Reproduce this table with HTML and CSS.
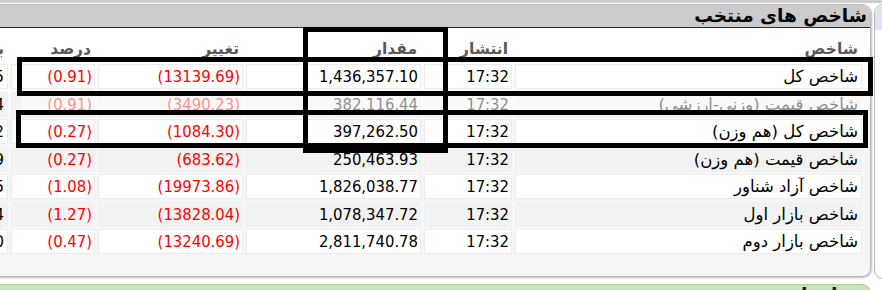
FILE: index.html
```html
<!DOCTYPE html>
<html lang="fa">
<head>
<meta charset="utf-8">
<title>شاخص های منتخب</title>
<link rel="stylesheet" href="styles.css">
</head>
<body>
<div class="page">
  <div class="above"></div>
  <div class="panels">
    <section class="panel main">
      <header class="main-head"><h2>شاخص های منتخب</h2></header>
      <div class="main-body">
        <div class="idx">
          <div class="row head">
            <div class="cell">شاخص</div>
            <div class="cell">انتشار</div>
            <div class="cell">مقدار</div>
            <div class="cell">تغییر</div>
            <div class="cell">درصد</div>
            <div class="cell">بیشترین</div>
          </div>
          <div class="row odd">
            <div class="cell name">شاخص کل</div>
            <div class="cell num">17:32</div>
            <div class="cell num">1,436,357.10</div>
            <div class="cell num neg">(13139.69)</div>
            <div class="cell num neg">(0.91)</div>
            <div class="cell num far">1,449,496.85</div>
          </div>
          <div class="row even">
            <div class="cell name">شاخص قیمت (وزنی-ارزشی)</div>
            <div class="cell num">17:32</div>
            <div class="cell num">382,116.44</div>
            <div class="cell num neg">(3490.23)</div>
            <div class="cell num neg">(0.91)</div>
            <div class="cell num far">385,606.14</div>
          </div>
          <div class="row odd">
            <div class="cell name">شاخص کل (هم وزن)</div>
            <div class="cell num">17:32</div>
            <div class="cell num">397,262.50</div>
            <div class="cell num neg">(1084.30)</div>
            <div class="cell num neg">(0.27)</div>
            <div class="cell num far">398,346.82</div>
          </div>
          <div class="row even">
            <div class="cell name">شاخص قیمت (هم وزن)</div>
            <div class="cell num">17:32</div>
            <div class="cell num">250,463.93</div>
            <div class="cell num neg">(683.62)</div>
            <div class="cell num neg">(0.27)</div>
            <div class="cell num far">251,147.59</div>
          </div>
          <div class="row odd">
            <div class="cell name">شاخص آزاد شناور</div>
            <div class="cell num">17:32</div>
            <div class="cell num">1,826,038.77</div>
            <div class="cell num neg">(19973.86)</div>
            <div class="cell num neg">(1.08)</div>
            <div class="cell num far">1,846,012.65</div>
          </div>
          <div class="row even">
            <div class="cell name">شاخص بازار اول</div>
            <div class="cell num">17:32</div>
            <div class="cell num">1,078,347.72</div>
            <div class="cell num neg">(13828.04)</div>
            <div class="cell num neg">(1.27)</div>
            <div class="cell num far">1,092,175.74</div>
          </div>
          <div class="row odd">
            <div class="cell name">شاخص بازار دوم</div>
            <div class="cell num">17:32</div>
            <div class="cell num">2,811,740.78</div>
            <div class="cell num neg">(13240.69)</div>
            <div class="cell num neg">(0.47)</div>
            <div class="cell num far">2,824,981.40</div>
          </div>
        </div>
      </div>
    </section>
    <aside class="panel side">
      <div class="side-head"></div>
    </aside>
  </div>
  <section class="panel next">
    <header class="next-head"><h2>نمادهای پربیننده</h2></header>
  </section>

  <div class="erase"></div>
  <div class="mark mark-a"></div>
  <div class="mark mark-b"></div>
  <div class="mark mark-c"></div>
</div>
</body>
</html>
```

FILE: styles.css
```css
* { box-sizing: border-box; }

html, body {
  margin: 0;
  padding: 0;
  background: #fff;
}

body {
  font-family: "DejaVu Sans", sans-serif;
}

.page {
  position: relative;
  width: 882px;
  height: 290px;
  overflow: hidden;
  background: #fff;
}

.above {
  height: 3px;
  background: #cdcdcd;
}

.panels {
  display: flex;
  align-items: flex-start;
  margin-top: 1px;
}

.main {
  flex: none;
  width: 932px;
  margin-left: -61px;
  border: 1px solid #b7b7b7;
  border-radius: 9px;
  overflow: hidden;
  box-shadow: 1px 1px 2px rgba(0, 0, 0, 0.25);
  background: linear-gradient(#ffffff 0, #ffffff 40px, #f6f6f6 120px, #f6f6f6 100%);
}

.main-head {
  height: 23px;
  background: #cbcbcb;
  border-bottom: 1px solid #2e2e2e;
  direction: rtl;
  padding-right: 3px;
}

.main-head h2 {
  margin: 0;
  font: bold 18.5px/22px "DejaVu Sans", sans-serif;
  color: #000;
  white-space: nowrap;
}

.main-body {
  padding: 8.5px 8px 21.5px;
}

.idx {
  direction: rtl;
  display: grid;
  row-gap: 2.5px;
}

.row {
  display: grid;
  grid-template-columns: 347px 88px 175px 145px 84px 60px;
  column-gap: 3px;
}

.cell {
  height: 25px;
  border: 1px solid transparent;
  padding: 0 3px 0 2px;
  font: 15.5px/23px "DejaVu Sans", sans-serif;
  color: #000;
  text-align: right;
  white-space: nowrap;
  overflow: hidden;
}

.head .cell {
  font-weight: bold;
  color: #585858;
  background: #fff;
}

.odd .cell {
  background: #fff;
  border-color: #ececec;
}

.even .cell {
  background: #f2f2f2;
  border-color: #f0f0f0;
}

.name {
  font-size: 16.5px;
  padding-right: 3px;
}

.num {
  direction: ltr;
  text-align: right;
  font-family: "DejaVu Sans Condensed", "DejaVu Sans", sans-serif;
  font-stretch: condensed;
  font-size: 16.5px;
  padding-right: 2px;
}

.num.far {
  direction: rtl;
  padding-right: 3px;
}

.neg {
  color: #ff0000;
}

.side {
  flex: none;
  width: 40px;
  height: 275px;
  margin-left: 3px;
  border: 1px solid #b7b7b7;
  border-radius: 9px;
  overflow: hidden;
  background: #fff;
}

.side-head {
  height: 25px;
  background: #dbe5f6;
}

.next {
  width: 932px;
  height: 30px;
  margin-left: -61px;
  margin-top: 5px;
  border: 1px solid #a9d095;
  border-radius: 9px 9px 0 0;
  background: #c6e6b3;
  overflow: hidden;
}

.next-head {
  direction: rtl;
  padding: 0 12px 0 0;
}

.next-head h2 {
  margin: 0;
  font: bold 19px/19px "DejaVu Sans", sans-serif;
  color: #1a1a1a;
}

.erase {
  position: absolute;
  left: 22px;
  top: 96px;
  width: 841px;
  height: 14px;
  background: rgba(255, 255, 255, 0.55);
}

.mark {
  position: absolute;
  border: 5px solid #000;
}

.mark-a {
  left: 17px;
  top: 57px;
  width: 856px;
  height: 39px;
}

.mark-b {
  left: 16px;
  top: 110px;
  width: 852px;
  height: 38px;
}

.mark-c {
  left: 303px;
  top: 27px;
  width: 145px;
  height: 126px;
}
```
